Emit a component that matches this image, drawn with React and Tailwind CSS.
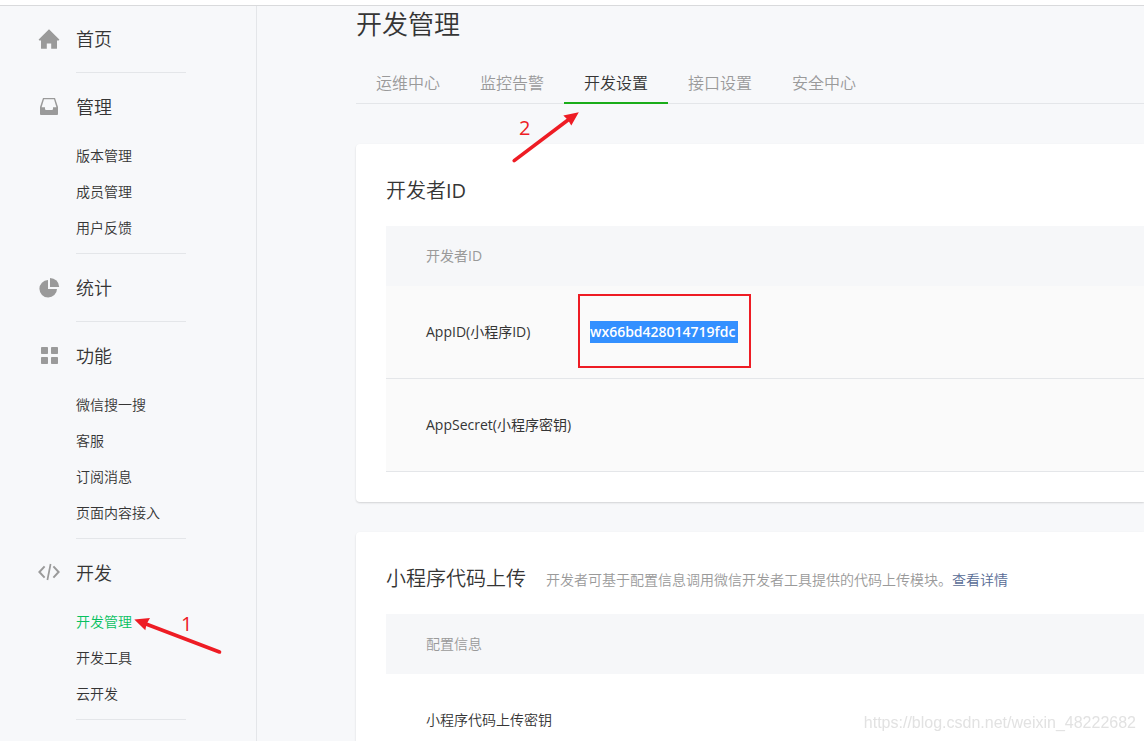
import React, { useState } from 'react';

const HomeIcon = () => (
  <svg width="22" height="22" viewBox="0 0 22 22" fill="currentColor" aria-hidden="true">
    <path d="M11 2.2 L21.3 12.6 Q21.4 13.4 20.6 13.4 H19 V21.2 Q19 21.8 18.4 21.8 H13.2 V16.6 H8.8 V21.8 H3.6 Q3 21.8 3 21.2 V13.4 H1.4 Q.6 13.4 .7 12.6 Z" />
  </svg>
);

const InboxIcon = () => (
  <svg width="22" height="22" viewBox="0 0 22 22" fill="currentColor" fillRule="evenodd" aria-hidden="true">
    <path d="M5 3 H17 L20 12 V19.1 Q20 20 19.1 20 H2.9 Q2 20 2 19.1 V12 Z M6 4.2 L3.6 12.2 H7 V14.2 L7.8 15 H14.2 L15 14.2 V12.2 H18.4 L16 4.2 Z" />
  </svg>
);

const PieIcon = () => (
  <svg width="22" height="22" viewBox="0 0 22 22" fill="currentColor" aria-hidden="true">
    <path d="M10 4 A8.8 8.8 0 1 0 19 13 H10 Z" />
    <path d="M12 2 A9.2 9.2 0 0 1 21.2 11 H12 Z" />
  </svg>
);

const GridIcon = () => (
  <svg width="22" height="22" viewBox="0 0 22 22" fill="currentColor" aria-hidden="true">
    <rect x="3" y="3" width="7" height="7" rx="0.8" />
    <rect x="13" y="3" width="7" height="7" rx="0.8" />
    <rect x="3" y="13" width="7" height="7" rx="0.8" />
    <rect x="13" y="13" width="7" height="7" rx="0.8" />
  </svg>
);

const CodeIcon = () => (
  <svg width="22" height="22" viewBox="0 0 22 22" fill="none" stroke="currentColor" strokeWidth="2" aria-hidden="true">
    <path d="M6.6 5.4 L1.4 11 L6.6 16.6" />
    <path d="M15.4 5.4 L20.6 11 L15.4 16.6" />
    <path d="M12.6 3 L9.4 19" strokeWidth="1.7" />
  </svg>
);

const menu = [
  { title: '首页', icon: HomeIcon, items: [] },
  { title: '管理', icon: InboxIcon, items: ['版本管理', '成员管理', '用户反馈'] },
  { title: '统计', icon: PieIcon, items: [] },
  { title: '功能', icon: GridIcon, items: ['微信搜一搜', '客服', '订阅消息', '页面内容接入'] },
  { title: '开发', icon: CodeIcon, items: ['开发管理', '开发工具', '云开发'] },
];

const tabs = ['运维中心', '监控告警', '开发设置', '接口设置', '安全中心'];

// Step 1: points at the active menu entry
const StepOne = () => (
  <div className="pointer-events-none absolute left-[57px] top-3 z-10 text-[#ee1c24]">
    <svg width="90" height="40" viewBox="0 0 90 40" aria-hidden="true">
      <path d="M13 8 L86.5 36" stroke="currentColor" strokeWidth="3.6" strokeLinecap="round" />
      <path d="M1.3 3.4 L17 2 L13.6 8 L12.3 14.2 Z" fill="currentColor" />
    </svg>
    <span className="absolute -top-1.5 left-12 text-xl font-normal leading-7">1</span>
  </div>
);

// Step 2: points at the active tab
const StepTwo = () => (
  <div className="pointer-events-none absolute -left-[53px] top-12 z-10 text-[#ee1c24]">
    <svg width="70" height="54" viewBox="0 0 70 54" aria-hidden="true">
      <path d="M57 10 L3.2 50.6" stroke="currentColor" strokeWidth="3.6" strokeLinecap="round" />
      <path d="M67.8 2.3 L52.3 5.5 L57 10 L60.3 15.6 Z" fill="currentColor" />
    </svg>
    <span className="absolute left-2 top-1 text-xl font-normal leading-7">2</span>
  </div>
);

const Sidebar = () => {
  const [active, setActive] = useState('开发管理');

  return (
    <aside className="w-[257px] shrink-0 overflow-hidden border-r border-[#e4e6e9] pl-[38px]">
      <nav className="-mt-px">
        {menu.map(({ title, icon: Icon, items }) => (
          <section key={title} className="flex gap-4">
            <div className="flex h-[66px] items-center text-[#9a9a9a]">
              <Icon />
            </div>
            <div className="min-h-[68px] w-[110px] border-b border-[#e4e6e9]">
              <h2 className="flex h-[65px] items-center pt-0.5 text-lg">{title}</h2>
              {items.length > 0 && (
                <ul className="pb-[7px] text-sm">
                  {items.map((item) => (
                    <li key={item} className="relative">
                      <a
                        href="#"
                        onClick={() => setActive(item)}
                        className={item === active ? 'block leading-9 text-[#07c160]' : 'block leading-9'}
                      >
                        {item}
                      </a>
                      {item === '开发管理' && <StepOne />}
                    </li>
                  ))}
                </ul>
              )}
            </div>
          </section>
        ))}
      </nav>
    </aside>
  );
};

const Card = ({ title, children, extra }) => (
  <section className="rounded-l bg-white pl-[30px] pt-[30px] shadow-[0_1px_2px_rgba(0,0,0,0.15)]">
    <div className="mb-5 flex h-8 items-center gap-5 whitespace-nowrap pt-0.5">
      <h2 className="text-xl">{title}</h2>
      {extra}
    </div>
    {children}
  </section>
);

const App = () => {
  const [tab, setTab] = useState('开发设置');

  return (
    <div className="flex h-screen flex-col overflow-hidden bg-[#f7f8fa] font-['Open_Sans','Noto_Sans_CJK_SC',sans-serif] font-[350] text-[#353535]">
      <header className="h-1.5 shrink-0 border-b border-[#d9dadc] bg-white" />
      <div className="flex min-h-0 flex-1">
        <Sidebar />

        <main className="min-w-0 flex-1 overflow-hidden pl-[99px]">
          <h1 className="text-[26px] leading-9">开发管理</h1>

          <div role="tablist" className="mb-10 mt-5 flex border-b border-[#e4e6e9]">
            {tabs.map((name) => (
              <div key={name} className="relative -mb-px">
                <button
                  role="tab"
                  aria-selected={name === tab}
                  onClick={() => setTab(name)}
                  className={
                    name === tab
                      ? 'h-[42px] border-b-2 border-[#1aad19] px-5 pt-0.5 text-base'
                      : 'h-[42px] border-b-2 border-transparent px-5 pt-0.5 text-base text-[#9a9a9a]'
                  }
                >
                  {name}
                </button>
                {name === '开发设置' && <StepTwo />}
              </div>
            ))}
          </div>

          <div className="flex flex-col gap-[30px]">
            <Card title={<>开发者<span className="font-normal">ID</span></>}>
              <div className="pb-[30px]">
                <table className="w-full border-separate border-spacing-0 text-left text-sm">
                  <thead>
                    <tr className="h-[60px] bg-[#f6f7f9] text-[#9a9a9a]">
                      <th colSpan="2" className="pl-10 font-normal">开发者ID</th>
                    </tr>
                  </thead>
                  <tbody>
                    <tr className="h-[93px] bg-[#fafafa]">
                      <td className="w-[204px] border-b border-[#e4e6e9] pl-10 font-normal">AppID(小程序ID)</td>
                      <td className="border-b border-[#e4e6e9]">
                        <span className="relative inline-block min-w-[148px] bg-[#3390ff] font-semibold leading-[22px] text-white">
                          wx66bd428014719fdc
                          <span className="absolute -bottom-[25px] -left-3 -right-[13px] -top-[27px] border-2 border-[#ee1c24]" />
                        </span>
                      </td>
                    </tr>
                    <tr className="h-[93px] bg-[#fafafa]">
                      <td className="border-b border-[#e4e6e9] pl-10 font-normal">AppSecret(小程序密钥)</td>
                      <td className="border-b border-[#e4e6e9]" />
                    </tr>
                  </tbody>
                </table>
              </div>
            </Card>

            <Card
              title="小程序代码上传"
              extra={
                <p className="pt-0.5 text-sm text-[#9a9a9a]">
                  开发者可基于配置信息调用微信开发者工具提供的代码上传模块。
                  <a href="#" className="text-[#576b95]">查看详情</a>
                </p>
              }
            >
              <table className="w-full border-separate border-spacing-0 text-left text-sm">
                <thead>
                  <tr className="h-[60px] bg-[#f6f7f9] text-[#9a9a9a]">
                    <th className="pl-10 font-[350]">配置信息</th>
                  </tr>
                </thead>
                <tbody>
                  <tr className="h-[93px]">
                    <td className="pb-0.5 pl-10">小程序代码上传密钥</td>
                  </tr>
                </tbody>
              </table>
            </Card>
          </div>
        </main>
      </div>

      <div className="pointer-events-none fixed bottom-1.5 right-2 font-['Liberation_Sans',sans-serif] text-base font-normal text-[#e2e2e2]">
        https://blog.csdn.net/weixin_48222682
      </div>
    </div>
  );
};

export default App;
